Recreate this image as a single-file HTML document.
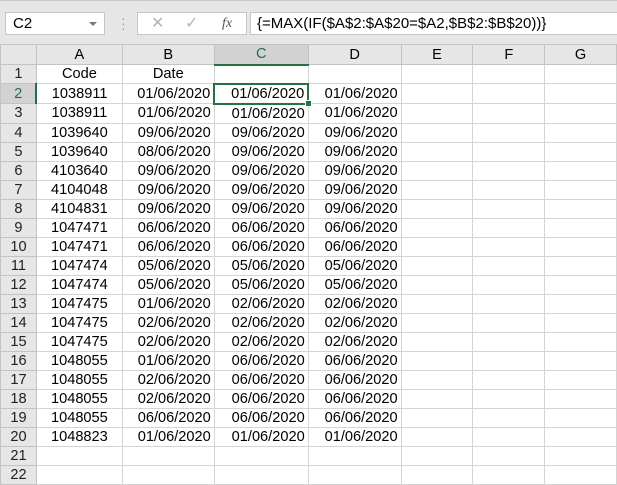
<!DOCTYPE html>
<html><head><style>
body{margin:0;width:617px;height:483px;overflow:hidden;background:#fff;font-family:"Liberation Sans",sans-serif;position:relative}
.top{position:absolute;left:0;top:0;width:617px;height:45px;background:#e6e6e6;border-top:1px solid #c8c8c8}
.nb{position:absolute;left:5px;top:11px;width:100px;height:23px;background:#fff;border:1px solid #c6c6c6;font-size:15px;line-height:22px;box-sizing:border-box;padding-left:7px}
.nb:after{content:"";position:absolute;right:7px;top:9px;border:4px solid transparent;border-top:4px solid #777}
.dots{position:absolute;left:121px;top:15px;color:#999;font-size:14px;line-height:5px;width:3px}
.fx{position:absolute;left:137px;top:11px;width:110px;height:23px;background:#fff;border:1px solid #c6c6c6;box-sizing:border-box;color:#b4b4b4;font-size:16px;line-height:21px}
.fb{position:absolute;left:250px;top:11px;width:370px;height:23px;background:#fff;border:1px solid #c6c6c6;box-sizing:border-box;font-size:15px;line-height:22px;padding-left:6px}
table{position:absolute;left:0;top:44px;border-collapse:collapse;table-layout:fixed;font-size:14.6px}
tr{height:19px}
td{height:18px;padding:0 2px;border:1px solid #d4d4d4;white-space:nowrap;overflow:hidden;line-height:18px;box-sizing:border-box}
td.h{background:#e6e6e6;border-color:#c3c3c3;text-align:center;color:#222}
tr.ch td{background:#e6e6e6;border-color:#c3c3c3;text-align:center}
td.c{text-align:center}td.r{text-align:right;padding-right:3px}
</style></head><body>
<div class="top">
<div class="nb">C2</div>
<div class="dots">·<br>·<br>·</div>
<div class="fx"><span style="position:absolute;left:13px">✕</span><span style="position:absolute;left:47px">✓</span><span style="position:absolute;left:84px;color:#555;font-style:italic;font-family:'Liberation Serif',serif;font-size:14px">fx</span></div>
<div class="fb">{=MAX(IF($A$2:$A$20=$A2,$B$2:$B$20))}</div>
</div>
<table>
<colgroup><col style="width:36px"><col style="width:86px"><col style="width:92px"><col style="width:94px"><col style="width:93px"><col style="width:72px"><col style="width:72px"><col style="width:72px"></colgroup>
<tr class="ch" style="height:20px"><td style="height:20px"></td><td>A</td><td>B</td><td style="background:#d2d2d2;border-bottom:2px solid #217346;color:#217346">C</td><td>D</td><td>E</td><td>F</td><td>G</td></tr>
<tr><td class="h">1</td><td class="c">Code</td><td class="c">Date</td><td></td><td></td><td></td><td></td><td></td></tr>
<tr><td class="h" style="background:#d2d2d2;color:#217346;border-right:2px solid #217346">2</td><td class="c">1038911</td><td class="r">01/06/2020</td><td class="r" style="border:2px solid #217346">01/06/2020</td><td class="r">01/06/2020</td><td></td><td></td><td></td></tr>
<tr><td class="h">3</td><td class="c">1038911</td><td class="r">01/06/2020</td><td class="r">01/06/2020</td><td class="r">01/06/2020</td><td></td><td></td><td></td></tr>
<tr><td class="h">4</td><td class="c">1039640</td><td class="r">09/06/2020</td><td class="r">09/06/2020</td><td class="r">09/06/2020</td><td></td><td></td><td></td></tr>
<tr><td class="h">5</td><td class="c">1039640</td><td class="r">08/06/2020</td><td class="r">09/06/2020</td><td class="r">09/06/2020</td><td></td><td></td><td></td></tr>
<tr><td class="h">6</td><td class="c">4103640</td><td class="r">09/06/2020</td><td class="r">09/06/2020</td><td class="r">09/06/2020</td><td></td><td></td><td></td></tr>
<tr><td class="h">7</td><td class="c">4104048</td><td class="r">09/06/2020</td><td class="r">09/06/2020</td><td class="r">09/06/2020</td><td></td><td></td><td></td></tr>
<tr><td class="h">8</td><td class="c">4104831</td><td class="r">09/06/2020</td><td class="r">09/06/2020</td><td class="r">09/06/2020</td><td></td><td></td><td></td></tr>
<tr><td class="h">9</td><td class="c">1047471</td><td class="r">06/06/2020</td><td class="r">06/06/2020</td><td class="r">06/06/2020</td><td></td><td></td><td></td></tr>
<tr><td class="h">10</td><td class="c">1047471</td><td class="r">06/06/2020</td><td class="r">06/06/2020</td><td class="r">06/06/2020</td><td></td><td></td><td></td></tr>
<tr><td class="h">11</td><td class="c">1047474</td><td class="r">05/06/2020</td><td class="r">05/06/2020</td><td class="r">05/06/2020</td><td></td><td></td><td></td></tr>
<tr><td class="h">12</td><td class="c">1047474</td><td class="r">05/06/2020</td><td class="r">05/06/2020</td><td class="r">05/06/2020</td><td></td><td></td><td></td></tr>
<tr><td class="h">13</td><td class="c">1047475</td><td class="r">01/06/2020</td><td class="r">02/06/2020</td><td class="r">02/06/2020</td><td></td><td></td><td></td></tr>
<tr><td class="h">14</td><td class="c">1047475</td><td class="r">02/06/2020</td><td class="r">02/06/2020</td><td class="r">02/06/2020</td><td></td><td></td><td></td></tr>
<tr><td class="h">15</td><td class="c">1047475</td><td class="r">02/06/2020</td><td class="r">02/06/2020</td><td class="r">02/06/2020</td><td></td><td></td><td></td></tr>
<tr><td class="h">16</td><td class="c">1048055</td><td class="r">01/06/2020</td><td class="r">06/06/2020</td><td class="r">06/06/2020</td><td></td><td></td><td></td></tr>
<tr><td class="h">17</td><td class="c">1048055</td><td class="r">02/06/2020</td><td class="r">06/06/2020</td><td class="r">06/06/2020</td><td></td><td></td><td></td></tr>
<tr><td class="h">18</td><td class="c">1048055</td><td class="r">02/06/2020</td><td class="r">06/06/2020</td><td class="r">06/06/2020</td><td></td><td></td><td></td></tr>
<tr><td class="h">19</td><td class="c">1048055</td><td class="r">06/06/2020</td><td class="r">06/06/2020</td><td class="r">06/06/2020</td><td></td><td></td><td></td></tr>
<tr><td class="h">20</td><td class="c">1048823</td><td class="r">01/06/2020</td><td class="r">01/06/2020</td><td class="r">01/06/2020</td><td></td><td></td><td></td></tr>
<tr><td class="h">21</td><td></td><td></td><td></td><td></td><td></td><td></td><td></td></tr>
<tr><td class="h">22</td><td></td><td></td><td></td><td></td><td></td><td></td><td></td></tr>
</table>
<div style="position:absolute;left:305px;top:100px;width:5px;height:5px;background:#217346;border:1px solid #fff"></div>
</body></html>
